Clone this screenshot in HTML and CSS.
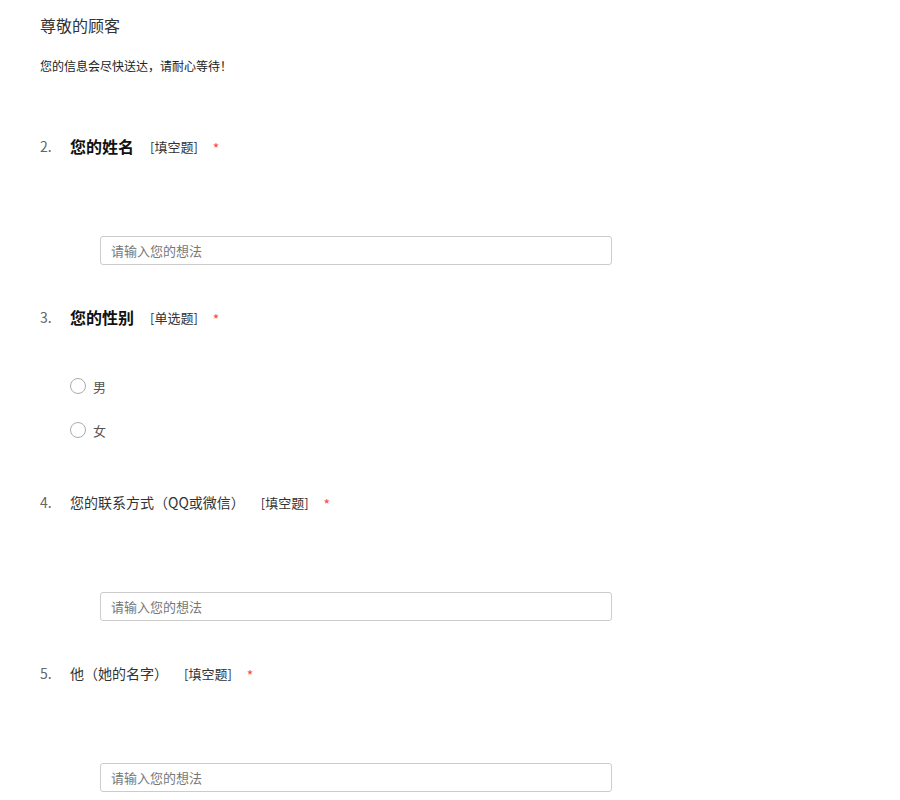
FILE: index.html
```html
<!DOCTYPE html>
<html lang="zh-CN">
<head>
<meta charset="utf-8">
<title>问卷</title>
<link rel="stylesheet" href="styles.css">
</head>
<body>
<div class="page">
  <div class="title">尊敬的顾客</div>
  <div class="desc">您的信息会尽快送达，请耐心等待！</div>

  <div class="q">
    <div class="q-head">
      <span class="q-num">2.</span>
      <span class="q-title strong">您的姓名</span>
      <span class="q-type">[填空题]</span>
      <span class="req">*</span>
    </div>
    <div class="q-body">
      <input class="text-input" type="text" placeholder="请输入您的想法">
    </div>
  </div>

  <div class="q">
    <div class="q-head">
      <span class="q-num">3.</span>
      <span class="q-title strong">您的性别</span>
      <span class="q-type">[单选题]</span>
      <span class="req">*</span>
    </div>
    <div class="radios">
      <label class="radio"><span class="radio-dot"></span><span class="radio-text">男</span></label>
      <label class="radio"><span class="radio-dot"></span><span class="radio-text">女</span></label>
    </div>
  </div>

  <div class="q">
    <div class="q-head">
      <span class="q-num">4.</span>
      <span class="q-title">您的联系方式（QQ或微信）</span>
      <span class="q-type">[填空题]</span>
      <span class="req">*</span>
    </div>
    <div class="q-body">
      <input class="text-input" type="text" placeholder="请输入您的想法">
    </div>
  </div>

  <div class="q">
    <div class="q-head">
      <span class="q-num">5.</span>
      <span class="q-title">他（她的名字）</span>
      <span class="q-type">[填空题]</span>
      <span class="req">*</span>
    </div>
    <div class="q-body">
      <input class="text-input" type="text" placeholder="请输入您的想法">
    </div>
  </div>
</div>
</body>
</html>
```
FILE: styles.css
```css
html, body {
  margin: 0;
  padding: 0;
  background: #fff;
}
body {
  font-family: "Noto Sans CJK SC", "Microsoft YaHei", "Noto Sans", sans-serif;
  color: #333;
}
.page {
  padding: 13px 0 0 40px;
}
.title {
  font-size: 16px;
  line-height: 24px;
  color: #333;
}
.desc {
  margin-top: 20px;
  font-size: 12px;
  line-height: 18px;
  color: #222;
}
.q {
  margin-top: 41px;
}
.desc + .q {
  margin-top: 60px;
}
.q-head {
  display: flex;
  align-items: center;
  height: 22px;
}
.q-num {
  width: 30px;
  font-size: 14px;
  color: #666;
}
.q-title {
  font-size: 14px;
  color: #333;
}
.q-title.strong {
  font-size: 16px;
  font-weight: 700;
  color: #111;
}
.q-type {
  margin-left: 16px;
  font-size: 13px;
  color: #333;
}
.req {
  margin-left: 15px;
  margin-top: 3px;
  font-size: 14px;
  color: #f44;
}
.q-body {
  margin-top: 79px;
  padding-left: 60px;
}
.text-input {
  display: block;
  box-sizing: border-box;
  width: 512px;
  height: 29px;
  margin: 0;
  padding: 0 10px;
  border: 1px solid #ccc;
  border-radius: 3px;
  font-family: inherit;
  font-size: 13px;
  color: #333;
  background: #fff;
  outline: none;
}
.text-input::placeholder {
  color: #777;
}
.radios {
  margin-top: 48px;
  padding-bottom: 10px;
  padding-left: 30px;
  display: flex;
  flex-direction: column;
  gap: 24px;
}
.radio {
  display: flex;
  align-items: center;
  height: 20px;
}
.radio-dot {
  box-sizing: border-box;
  width: 16px;
  height: 16px;
  border: 1px solid #aaa;
  border-radius: 50%;
  background: #fff;
}
.radio-text {
  margin-left: 7px;
  font-size: 13px;
  color: #555;
}
```
